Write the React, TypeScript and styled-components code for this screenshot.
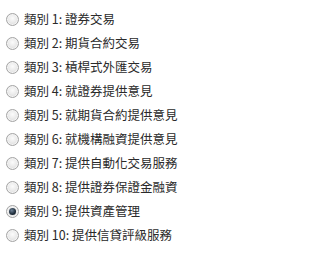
import React, { useState } from "react";
import styled, { createGlobalStyle } from "styled-components";

const GlobalStyle = createGlobalStyle`
  html, body {
    margin: 0;
    padding: 0;
    background: #ffffff;
  }
`;

const categories = [
  "證券交易",
  "期貨合約交易",
  "槓桿式外匯交易",
  "就證券提供意見",
  "就期貨合約提供意見",
  "就機構融資提供意見",
  "提供自動化交易服務",
  "提供證券保證金融資",
  "提供資產管理",
  "提供信貸評級服務",
];

const List = styled.div`
  display: flex;
  flex-direction: column;
  padding: 7px 0 0 6px;
  font-family: "Noto Sans CJK TC", "Liberation Sans", sans-serif;
  font-size: 12.5px;
  color: #2a2a2a;
`;

const Row = styled.label`
  display: flex;
  align-items: center;
  gap: 5px;
  height: 24px;
  cursor: pointer;
`;

const Radio = styled.span<{ $checked: boolean }>`
  position: relative;
  flex: none;
  width: 13px;
  height: 13px;
  box-sizing: border-box;
  border-radius: 50%;
  border: 1px solid #a4a4a4;
  background: radial-gradient(
    circle at 50% 40%,
    #fbfbfb 0%,
    #ececec 45%,
    #cfcfcf 100%
  );
  box-shadow: inset 0 0 0 1px #f4f4f4;

  &::after {
    content: "";
    display: ${({ $checked }) => ($checked ? "block" : "none")};
    position: absolute;
    left: 2px;
    top: 2px;
    width: 7px;
    height: 7px;
    border-radius: 50%;
    background: radial-gradient(circle at 40% 35%, #6d8196 0%, #1c2a38 60%, #0d141c 100%);
  }
`;

const Label = styled.span`
  white-space: nowrap;
  line-height: 1;
`;

const App: React.FC = () => {
  const [selected, setSelected] = useState(9);

  return (
    <>
      <GlobalStyle />
      <List>
        {categories.map((name, i) => (
          <Row key={i} onClick={() => setSelected(i + 1)}>
            <Radio $checked={selected === i + 1} />
            <Label>
              類別 {i + 1}: {name}
            </Label>
          </Row>
        ))}
      </List>
    </>
  );
};

export default App;
